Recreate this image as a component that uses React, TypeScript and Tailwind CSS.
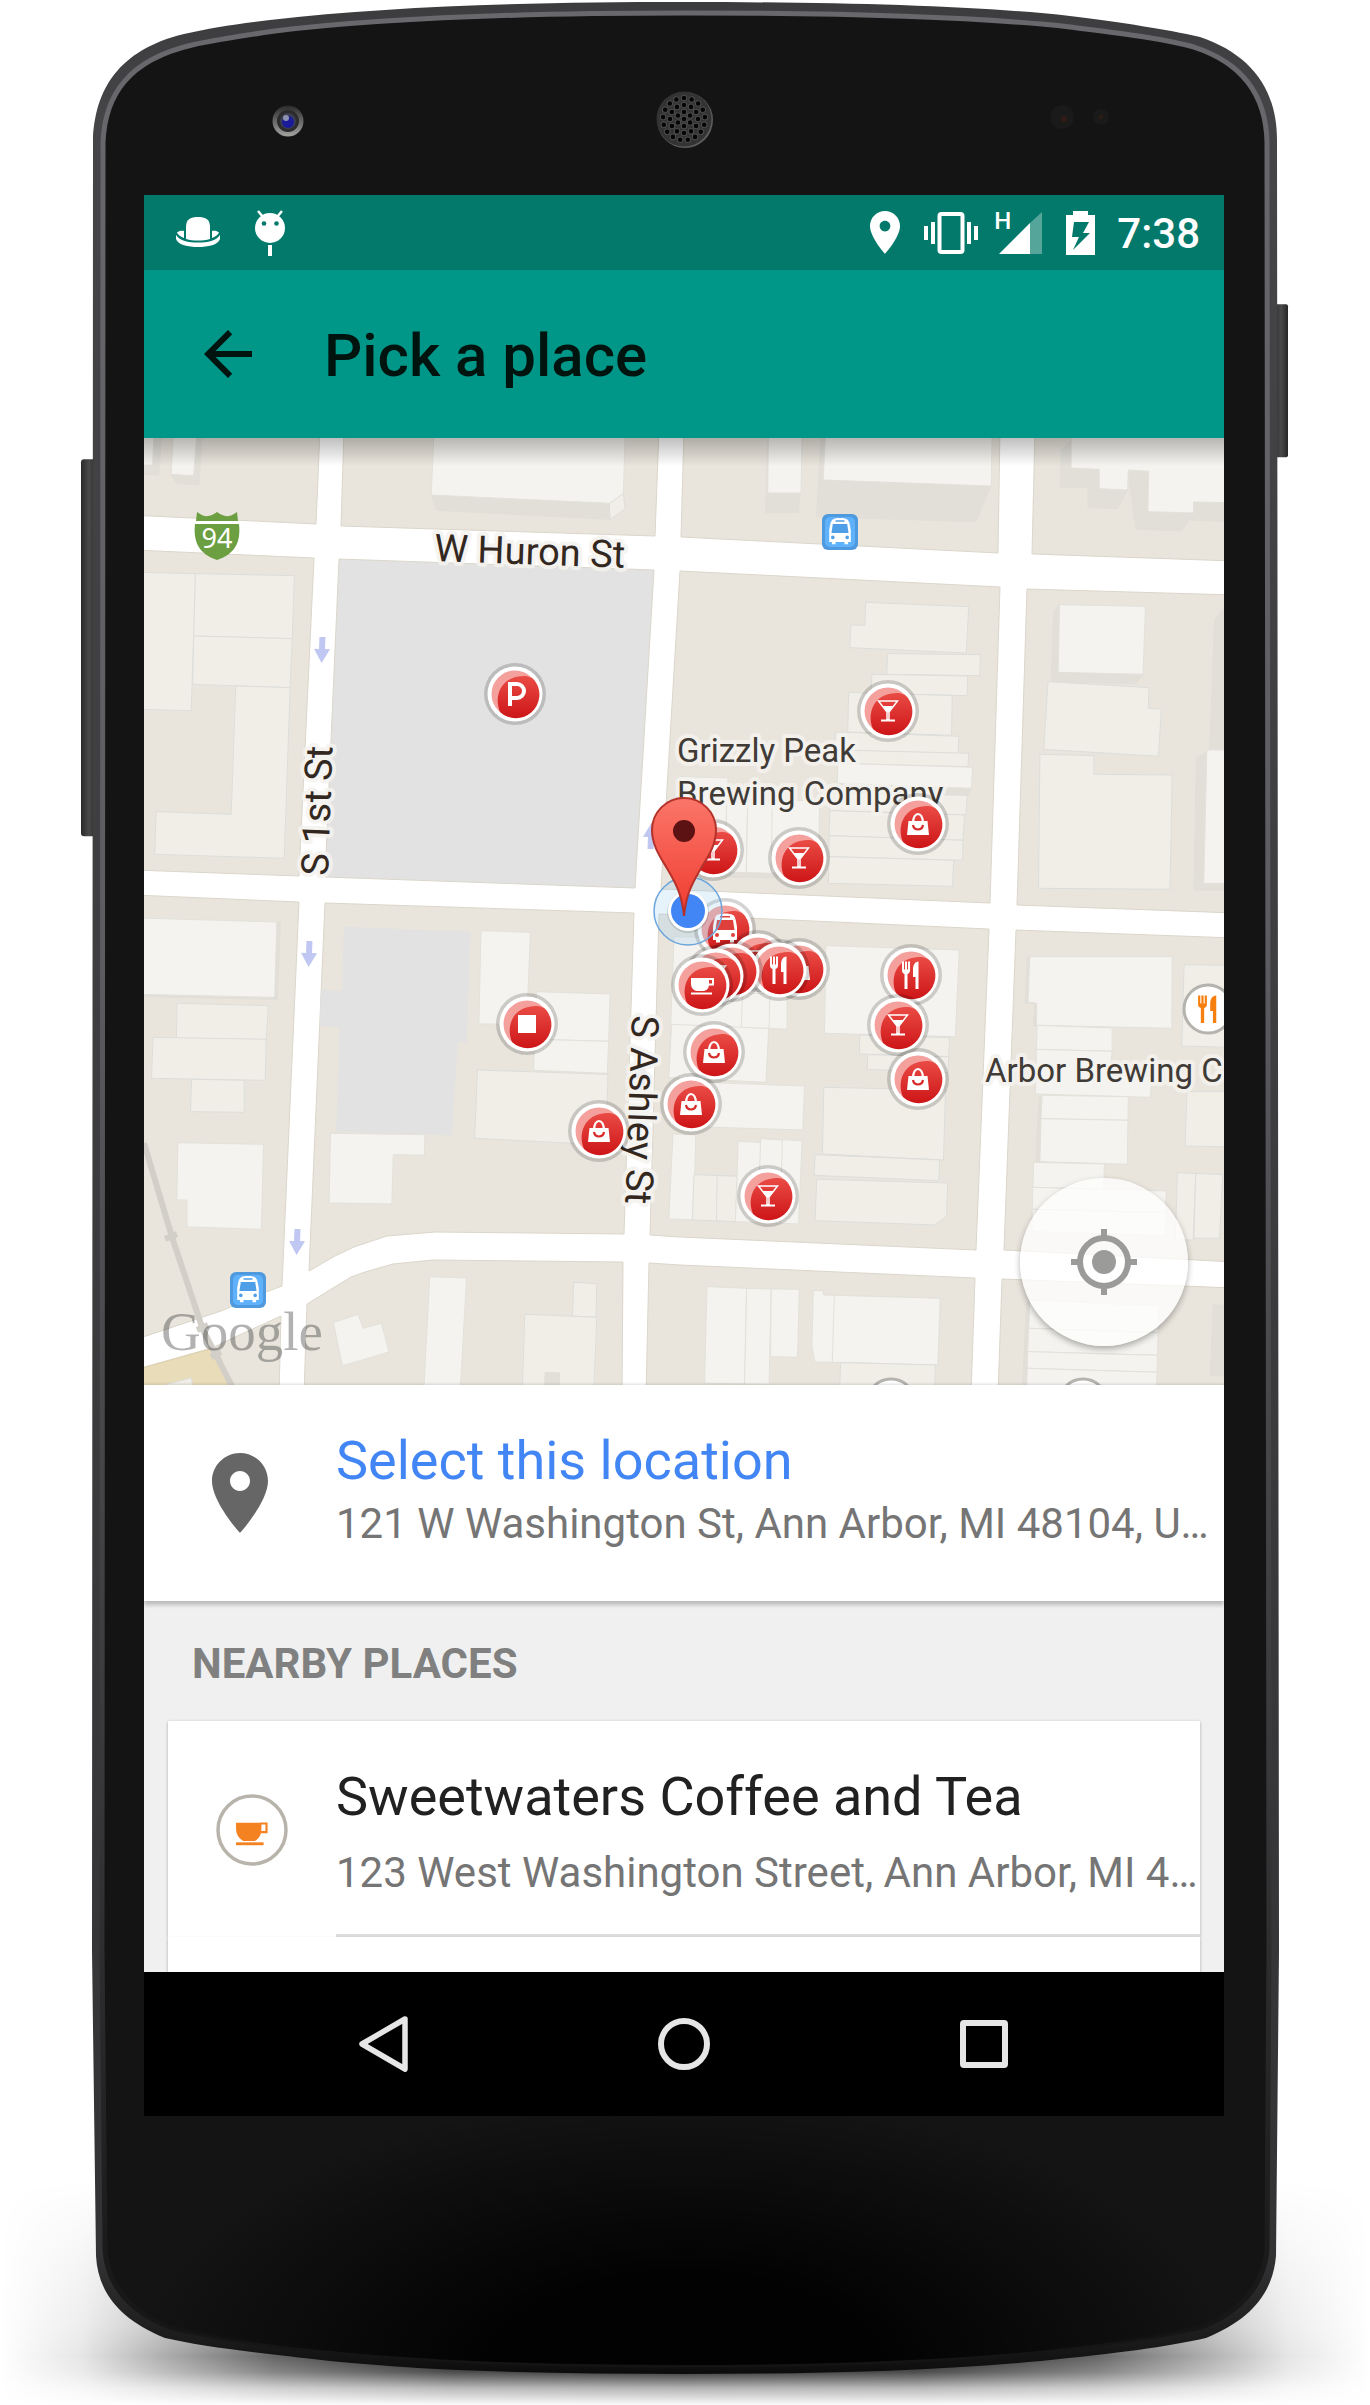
import React from "react";

type Kind = "tall" | "flat" | "side" | "lot" | "sand";
type Shape = [Kind, string];

const fills: Record<Kind, string> = {
  tall: "#f4f3ef",
  flat: "#f1eee7",
  side: "#e1dfd8",
  lot: "#e2e2e2",
  sand: "#e8dcb9",
};
const strokes: Record<Kind, string> = {
  tall: "#e3e1da",
  flat: "#dddedb",
  side: "#e1dfd8",
  lot: "#e2e2e2",
  sand: "#ded2ae",
};

const blocks = [
  "130,430 320,430 316,524 130,515",
  "344,430 341,526 655,536 659,430",
  "684,430 681,537 998,553 1000,430",
  "1035,430 1032,554 1234,561 1234,430",
  "134,550 314,558 299,876 134,870",
  "680,571 1000,587 990,903 661,889",
  "1027,589 1234,595 1234,913 1017,905",
  "134,895 299,902 282,1286 266,1292 221,1311 134,1340",
  "325,903 634,913 624,1234 435,1232 387,1236 354,1247 335,1256 309,1271",
  "659,914 989,929 976,1250 680,1237 650,1235",
  "1016,930 1234,938 1234,1262 1004,1250",
  "134,1370 212,1348 235,1337 281,1316 279,1395 134,1395",
  "307,1304 351,1277 365,1272 393,1264 433,1260 623,1262 622,1395 304,1395",
  "649,1263 680,1265 975,1278 971,1395 646,1395",
  "1002,1279 1234,1288 1234,1395 998,1395",
];

const northWest: Shape[] = [
  ["side", "0,10 62,10 53,135 0,133"],
  ["tall", "0,10 40,10 36,105 0,105"],
  ["side", "95,10 178,10 168,165 105,160 88,133"],
  ["tall", "95,10 162,10 153,137 88,133"],
  ["side", "830,195 1338,220 1340,268 845,241"],
  ["flat", "1338,220 1378,190 1383,236 1340,268"],
  ["tall", "838,10 1383,10 1378,190 1338,220 830,195"],
  ["flat", "0,427 158,431 153,618 146,842 0,838"],
  ["flat", "158,431 440,437 434,626 153,618"],
  ["flat", "153,618 434,626 428,773 150,763"],
  ["flat", "273,768 428,773 411,1285 42,1273 46,1145 260,1153"],
];

const northEast: Shape[] = [
  ["side", "250,10 350,10 338,248 244,248"],
  ["tall", "252,10 348,10 345,189 250,189"],
  ["side", "402,10 415,10 408,150 886,168 844,275 389,260"],
  ["tall", "415,10 890,10 887,168 408,150"],
  ["side", "1087,60 1115,30 1195,118 1276,180 1247,236 1163,232 1163,173 1083,173"],
  ["side", "1276,120 1336,122 1334,247 1464,218 1570,218 1570,275 1450,270 1430,302 1300,298"],
  ["tall", "1115,30 1118,10 1570,10 1570,218 1464,216 1464,249 1334,245 1336,124 1278,120 1276,180 1195,176 1195,118 1115,114"],
  ["flat", "529,517 823,530 816,669 484,653 487,585 527,586"],
  ["flat", "592,671 856,674 855,737 589,733"],
  ["flat", "547,733 820,738 818,797 545,790"],
  ["flat", "481,787 776,797 774,916 478,906"],
  ["flat", "443,906 795,919 793,970 440,960"],
  ["flat", "440,960 823,970 821,1010 440,1000"],
  ["side", "440,1060 831,1075 820,1096 440,1090"],
  ["tall", "450,1000 834,1012 831,1075 448,1060"],
  ["flat", "427,1090 819,1096 815,1155 427,1142"],
  ["flat", "427,1142 811,1155 807,1231 425,1217"],
  ["flat", "425,1217 807,1231 805,1291 425,1280"],
  ["flat", "425,1280 780,1291 777,1369 423,1360"],
  ["side", "0,1320 400,1330 390,1346 0,1340"],
  ["tall", "0,1040 137,1044 133,1118 398,1110 395,1330 0,1325"],
  ["tall", "133,1118 193,1118 189,1328 128,1326"],
  ["tall", "193,1118 263,1116 260,1330 189,1328"],
  ["side", "1080,524 1065,550 1058,755 1298,762 1321,733 1078,727"],
  ["tall", "1082,524 1327,529 1320,733 1078,727"],
  ["flat", "1049,755 1337,773 1335,835 1372,838 1364,979 1037,958"],
  ["flat", "1026,973 1180,977 1180,1033 1403,1035 1397,1378 1022,1375"],
  ["side", "1570,525 1551,535 1524,570 1510,960 1472,985 1465,1380 1570,1380"],
  ["tall", "1570,960 1502,960 1493,1360 1570,1360"],
];

const southWest: Shape[] = [
  ["side", "390,66 400,68 392,298 0,290 0,283 384,292"],
  ["tall", "0,54 390,66 384,292 0,283"],
  ["flat", "105,310 366,317 360,418 104,414"],
  ["flat", "37,412 360,418 357,541 33,535"],
  ["flat", "147,538 297,541 297,637 144,635"],
  ["tall", "108,728 352,733 346,988 134,981 134,900 105,900"],
  ["lot", "583,82 941,97 930,425 904,425 888,705 561,693 570,380 514,376 517,270 577,275"],
  ["tall", "972,92 1113,97 1106,280 1100,373 966,372"],
  ["tall", "1130,275 1340,282 1336,424 1125,418"],
  ["tall", "1125,418 1336,424 1332,520 1122,511"],
  ["flat", "962,510 1334,523 1328,735 954,715"],
  ["tall", "543,700 812,704 811,766 722,764 718,912 539,909"],
  ["tall", "551,1268 622,1243 636,1285 688,1270 710,1356 577,1398"],
  ["tall", "826,1130 931,1134 913,1470 809,1470"],
  ["flat", "1236,1147 1302,1151 1300,1252 1233,1248"],
  ["flat", "1097,1243 1302,1252 1294,1470 1090,1470"],
  ["side", "1155,1417 1196,1419 1195,1470 1153,1470"],
  ["sand", "0,1406 190,1350 218,1345 268,1470 0,1470"],
  ["flat", "70,1455 146,1434 152,1470 60,1470"],
];

const southEast: Shape[] = [
  ["tall", "-17,110 60,112 120,180 305,200 305,388 253,385 245,547 -32,533"],
  ["tall", "-24,373 253,385 245,547 -32,533"],
  ["tall", "178,280 256,280 254,385 175,382"],
  ["tall", "30,546 355,558 350,690 30,680"],
  ["tall", "-20,702 45,705 38,960 -32,957"],
  ["flat", "40,824 163,829 158,965 35,960"],
  ["flat", "106,827 163,829 158,965 104,962"],
  ["tall", "166,724 228,727 230,716 348,722 338,972 158,965"],
  ["tall", "230,716 292,720 285,970 222,968"],
  ["tall", "416,137 796,150 785,410 412,400"],
  ["flat", "512,405 769,413 766,470 512,462"],
  ["flat", "535,464 766,470 764,518 534,508"],
  ["flat", "410,562 757,570 751,780 406,762"],
  ["flat", "385,764 740,780 738,842 382,826"],
  ["flat", "390,838 763,849 760,950 725,975 385,962"],
  ["side", "990,170 998,170 992,308 1018,312 1016,380 1007,378 1012,312 984,308"],
  ["tall", "997,170 1403,170 1402,385 1016,376 1017,310 992,306"],
  ["flat", "1437,194 1570,196 1570,442 1430,438"],
  ["tall", "1018,376 1232,384 1232,454 1016,448"],
  ["tall", "1016,448 1232,454 1225,525 1345,530 1341,592 1013,582"],
  ["side", "1024,590 1032,590 1026,785 1014,785"],
  ["tall", "1032,586 1278,590 1277,661 1029,656"],
  ["tall", "1029,656 1277,661 1275,793 1026,785"],
  ["tall", "1008,787 1210,792 1208,868 1006,862"],
  ["tall", "1006,862 1386,873 1384,938 1004,928"],
  ["tall", "1004,928 1384,938 1383,1007 1003,995"],
  ["flat", "1445,575 1570,575 1570,741 1440,738"],
  ["flat", "1418,818 1470,820 1463,1020 1412,1020"],
  ["flat", "1470,820 1547,824 1538,1015 1465,1014"],
  ["tall", "77,1160 190,1165 184,1452 70,1450"],
  ["tall", "190,1165 260,1167 254,1453 184,1452"],
  ["tall", "260,1167 340,1168 335,1372 258,1370"],
  ["tall", "380,1172 408,1172 410,1185 742,1195 735,1395 384,1386 376,1340"],
  ["tall", "440,1186 742,1195 735,1395 434,1387"],
  ["flat", "458,1388 728,1395 726,1470 455,1470"],
  ["side", "988,1205 997,1200 990,1470 976,1470"],
  ["tall", "997,1200 1365,1218 1363,1298 994,1285"],
  ["tall", "994,1285 1363,1298 1361,1366 991,1355"],
  ["tall", "991,1355 1361,1366 1360,1417 990,1405"],
  ["tall", "990,1405 1360,1417 1358,1470 988,1470"],
  ["side", "1520,1215 1570,1217 1570,1430 1512,1425"],
];

/* Buildings of one map tile, drawn in the tile's own units. */
function Tile({ x, y, shapes }: { x: number; y: number; shapes: Shape[] }) {
  return (
    <g transform={`translate(${x} ${y}) scale(0.3508 0.3333)`}>
      {shapes.map(([kind, points]) => (
        <polygon
          key={points}
          points={points}
          fill={fills[kind]}
          stroke={strokes[kind]}
          strokeWidth="1"
          vectorEffect="non-scaling-stroke"
        />
      ))}
    </g>
  );
}

type Glyph = "bar" | "bag" | "food" | "cup" | "bus" | "stop" | "parking";

function PinGlyph({ glyph }: { glyph: Glyph }) {
  switch (glyph) {
    case "bar":
      return (
        <g>
          <path d="M-9.500 -10H9.500L1 1V8.500H-1V1Z" fill="none" stroke="#fff" strokeWidth="1.500" />
          <path d="M-6 -5H6L0 2Z" fill="#fff" />
          <path d="M-7 9.500H7" stroke="#fff" strokeWidth="2" />
        </g>
      );
    case "bag":
      return (
        <g>
          <path d="M-5 -1C-5 -13 5 -13 5 -1" fill="none" stroke="#fff" strokeWidth="2.200" />
          <path d="M-9.500 -3H9.500L11 11H-11Z" fill="#fff" />
          <path d="M-5 1C-4 7 4 7 5 1" fill="none" stroke="#d62a28" strokeWidth="2.200" />
        </g>
      );
    case "food":
      return <Cutlery color="#fff" />;
    case "cup":
      return <CupGlyph color="#fff" />;
    case "bus":
      return <BusGlyph window="#e0403c" />;
    case "stop":
      return <rect x="-9" y="-9" width="18" height="18" fill="#fff" />;
    default:
      return <path d="M-5 12V-10H2A6 6 0 0 1 2 4H-5" fill="none" stroke="#fff" strokeWidth="4" />;
  }
}

function Cutlery({ color }: { color: string }) {
  return (
    <g fill={color}>
      <path d="M-9 -13.500h2v8h1v-8h2v8h1v-8h2v9c0 2-1 3-2.500 3.500V14h-3V-1C-8 -1.500 -9 -2.500 -9 -4.500Z" />
      <path d="M7.500 -13.500V14h-3V2H2V-5C2 -10 4 -13.500 7.500 -13.500Z" />
    </g>
  );
}

function CupGlyph({ color }: { color: string }) {
  return (
    <g>
      <path d="M-11 -7H7V-1C7 4 4 6 1 6H-5C-8 6 -11 3 -11 -1Z" fill={color} />
      <path d="M7 -6h4v5.500H6" fill="none" stroke={color} strokeWidth="2" />
      <path d="M-11 8.500H10" stroke={color} strokeWidth="2" />
    </g>
  );
}

function BusGlyph({ window }: { window: string }) {
  return (
    <g>
      <path
        d="M-8 -14C-4 -16 4 -16 8 -14C10 -13 11 -9 12 -2V11H9V13.500H5V11H-5V13.500H-9V11H-12V-2C-11 -9 -10 -13 -8 -14Z"
        fill="#fff"
      />
      <path d="M-8 -9H8L9.500 1H-9.500ZM-5 -13H5V-11.500H-5Z" fill={window} />
      <circle cx="-8" cy="6" r="2" fill={window} />
      <circle cx="8" cy="6" r="2" fill={window} />
    </g>
  );
}

function Pin({ x, y, glyph }: { x: number; y: number; glyph: Glyph }) {
  return (
    <g transform={`translate(${x} ${y})`}>
      <circle r="31" fill="#000" fillOpacity="0.17" />
      <circle r="27.500" fill="#fff" />
      <circle r="23.500" fill="#f4a09d" />
      <path d="M-15 18C-21 4 -16 -17 8 -18C14 -18 18 -16 20 -13A23.500 23.500 0 0 1 -15 18Z" fill="url(#pinRed)" />
      <PinGlyph glyph={glyph} />
    </g>
  );
}

const pins: [number, number, Glyph][] = [
  [515, 694, "parking"],
  [888, 711, "bar"],
  [918, 824, "bag"],
  [713, 850, "bar"],
  [799, 858, "bar"],
  [725, 929, "bus"],
  [758, 961, "bar"],
  [799, 969, "bag"],
  [779, 970, "food"],
  [732, 971, "bag"],
  [716, 976, "bar"],
  [702, 985, "cup"],
  [911, 975, "food"],
  [898, 1025, "bar"],
  [918, 1079, "bag"],
  [714, 1052, "bag"],
  [691, 1104, "bag"],
  [768, 1196, "bar"],
  [599, 1131, "bag"],
  [527, 1024, "stop"],
];

function BusStop({ x, y }: { x: number; y: number }) {
  return (
    <g transform={`translate(${x} ${y})`}>
      <rect x="-18" y="-18" width="36" height="36" rx="6" fill="#4f9ade" />
      <rect x="-15" y="-15" width="30" height="30" rx="5" fill="#5fb1fb" />
      <g transform="scale(.9)">
        <BusGlyph window="#4f9fe8" />
      </g>
    </g>
  );
}

function OneWay({ x, y, up = false }: { x: number; y: number; up?: boolean }) {
  return (
    <path
      transform={`translate(${x} ${y}) rotate(${up ? 182 : 2})`}
      d="M-3 -13H3V-1H8L0 13L-8 -1H-3Z"
      fill="#bfc7f2"
    />
  );
}

function StreetMap() {
  const halo = {
    stroke: "#f5f3ef",
    strokeOpacity: 0.85,
    strokeWidth: 8,
    strokeLinejoin: "round" as const,
    paintOrder: "stroke",
  };
  return (
    <svg
      viewBox="144 438 1080 947"
      preserveAspectRatio="xMidYMid slice"
      className="block h-[947px] w-full font-[Roboto,sans-serif]"
      role="img"
      aria-label="Map of nearby places"
    >
      <defs>
        <linearGradient id="pinRed" x1="0" y1="0" x2="0" y2="1">
          <stop offset="0" stopColor="#ea4b45" />
          <stop offset="1" stopColor="#cd1517" />
        </linearGradient>
        <linearGradient id="markerRed" x1="0" y1="0" x2="0" y2="1">
          <stop offset="0" stopColor="#fb766a" />
          <stop offset="1" stopColor="#f03a2e" />
        </linearGradient>
      </defs>
      <rect x="144" y="438" width="1080" height="947" fill="#fff" />
      {blocks.map((points) => (
        <polygon key={points} points={points} fill="#e9e5dd" stroke="#dbd6ca" strokeWidth="1" />
      ))}
      <polygon points="339,559 654,570 635,888 325,877" fill="#e2e2e2" stroke="#dbd6ca" strokeWidth="1" />
      <Tile x={140} y={430} shapes={northWest} />
      <Tile x={680} y={430} shapes={northEast} />
      <Tile x={140} y={900} shapes={southWest} />
      <Tile x={680} y={900} shapes={southEast} />
      <g fill="none" stroke="#d2cfc9">
        <path d="M144 1143L172 1237L203 1330L234 1390" strokeWidth="6" />
        <path d="M165 1239l12-5M197 1330l11-5M211 1357l10-5" strokeWidth="6" />
      </g>

      <OneWay x={322} y={650} />
      <OneWay x={309} y={954} />
      <OneWay x={297} y={1242} />
      <OneWay x={651} y={836} up />
      <OneWay x={642} y={1078} up />

      <g fontSize="38" fill="#33281f" {...halo}>
        <text transform="translate(434 561) rotate(2)">W Huron St</text>
        <text transform="translate(328 876) rotate(-88)">S 1st St</text>
        <text transform="translate(632 1015) rotate(92)">S Ashley St</text>
      </g>
      <g fontSize="33" fill="#403b36" {...halo}>
        <text x="677" y="762">Grizzly Peak</text>
        <text x="677" y="805">Brewing Company</text>
        <text x="985" y="1082">Arbor Brewing C</text>
      </g>

      <g transform="translate(217 536)">
        <path d="M-20 -24C-12 -18 -7 -19 0 -24C7 -19 12 -18 20 -24L21 -15H-21Z" fill="#6b9f41" />
        <path d="M-22 -12H22C24 6 18 18 0 24C-18 18 -24 6 -22 -12Z" fill="#6b9f41" />
        <text y="12" textAnchor="middle" fontSize="27" fill="#fff" className="font-['Noto_Sans',sans-serif]">
          94
        </text>
      </g>
      <BusStop x={840} y={532} />
      <BusStop x={248} y={1290} />

      <g fill="#fff" stroke="#b5b3ad" strokeWidth="3">
        <circle cx="1208" cy="1009" r="24" />
        <circle cx="891" cy="1403" r="24" />
        <circle cx="1083" cy="1403" r="24" />
      </g>
      <g transform="translate(1208 1009) scale(1.100 1)">
        <Cutlery color="#f77f0e" />
      </g>

      {pins.map(([x, y, glyph]) => (
        <Pin key={`${x}-${y}`} x={x} y={y} glyph={glyph} />
      ))}

      <circle cx="688" cy="911" r="34" fill="#8cc8ef" fillOpacity="0.22" stroke="#6ba6dc" strokeWidth="1.500" />
      <circle cx="688" cy="912" r="21" fill="#000" fillOpacity="0.12" />
      <circle cx="688" cy="911" r="20" fill="#fff" />
      <circle cx="688" cy="911" r="17" fill="#4285f4" />
      <path
        d="M684 916C682 897 678 887 668 870C661 858 652 846 652 830A32 32 0 0 1 716 830C716 846 707 858 700 870C690 887 686 897 684 916Z"
        fill="url(#markerRed)"
        stroke="#b5322b"
        strokeWidth="2"
      />
      <circle cx="684" cy="831" r="11" fill="#5c1212" />

      <text
        x="161"
        y="1350"
        fontSize="55"
        fill="#000"
        fillOpacity="0.3"
        className="font-['Liberation_Serif',serif]"
      >
        Google
      </text>
    </svg>
  );
}

const grilleHoles: [number, number][] = [
  [0, 1],
  [7, 6],
  [14, 12],
  [21, 17],
].flatMap(([radius, count]) =>
  Array.from({ length: count }, (_, i): [number, number] => {
    const angle = (i / count) * Math.PI * 2 - Math.PI / 2;
    return [684 + radius * Math.cos(angle), 119 + radius * Math.sin(angle)];
  }),
);

const shell =
  "M684 2C840 2 980 6 1070 16C1125 23 1165 29 1200 37C1250 54 1277 88 1277 140L1279 1950L1276 2255C1273 2290 1253 2318 1206 2337C1165 2346 1120 2352 1041 2360C920 2371 800 2373 684 2373C560 2373 440 2371 330 2360C250 2351 205 2346 165 2337C118 2318 98 2290 96 2255L92 1950L93 140C95 90 118 50 184 34C210 28 235 24 270 20C390 6 530 2 684 2Z";
const face =
  "M684 13C840 13 980 17 1070 27C1125 34 1160 38 1194 47C1240 62 1266 92 1267 142L1269 1950L1267 2250C1263 2284 1242 2310 1202 2326C1160 2336 1110 2342 1040 2350C920 2361 800 2364 684 2364C560 2364 440 2361 330 2350C250 2342 210 2336 169 2326C129 2310 108 2284 105 2250L102 1950L103 142C105 95 128 60 192 45C215 40 240 36 275 31C390 17 530 13 684 13Z";

function Handset() {
  return (
    <svg
      viewBox="0 0 1370 2405"
      preserveAspectRatio="none"
      className="absolute inset-0 h-full w-full"
      aria-hidden="true"
    >
      <defs>
        <radialGradient id="faceShade" gradientUnits="userSpaceOnUse" cx="684" cy="2370" r="560" gradientTransform="translate(0 1185) scale(1 0.5)">
          <stop offset="0.35" stopColor="#000" stopOpacity="0.9" />
          <stop offset="1" stopColor="#000" stopOpacity="0" />
        </radialGradient>
        <linearGradient id="rim" x1="0" y1="0" x2="0" y2="1">
          <stop offset="0" stopColor="#3c3c3e" />
          <stop offset="0.05" stopColor="#454548" />
          <stop offset="0.5" stopColor="#3c3c3e" />
          <stop offset="0.95" stopColor="#333335" />
          <stop offset="0.985" stopColor="#1c1c1c" />
          <stop offset="1" stopColor="#0c0c0c" />
        </linearGradient>
        <linearGradient id="bevel" x1="0" y1="0" x2="0" y2="1">
          <stop offset="0" stopColor="#68686d" />
          <stop offset="0.4" stopColor="#5c5c61" />
          <stop offset="0.75" stopColor="#38383a" />
          <stop offset="1" stopColor="#141414" />
        </linearGradient>
        <linearGradient id="key" x1="0" y1="0" x2="1" y2="0">
          <stop offset="0" stopColor="#2a2a2a" />
          <stop offset="0.5" stopColor="#4a4a4a" />
          <stop offset="1" stopColor="#262626" />
        </linearGradient>
        <linearGradient id="lens" x1="0" y1="0" x2="0" y2="1">
          <stop offset="0" stopColor="#2b2b2b" />
          <stop offset="1" stopColor="#a3a3a3" />
        </linearGradient>
        <linearGradient id="shadowAcross" x1="0" y1="0" x2="1" y2="0">
          <stop offset="0" stopColor="#000" stopOpacity="0" />
          <stop offset="0.060" stopColor="#000" stopOpacity="0.1" />
          <stop offset="0.120" stopColor="#000" stopOpacity="0.32" />
          <stop offset="0.200" stopColor="#000" stopOpacity="0.6" />
          <stop offset="0.330" stopColor="#000" stopOpacity="0.88" />
          <stop offset="0.500" stopColor="#000" stopOpacity="0.95" />
          <stop offset="0.670" stopColor="#000" stopOpacity="0.88" />
          <stop offset="0.800" stopColor="#000" stopOpacity="0.6" />
          <stop offset="0.880" stopColor="#000" stopOpacity="0.32" />
          <stop offset="0.940" stopColor="#000" stopOpacity="0.1" />
          <stop offset="1" stopColor="#000" stopOpacity="0" />
        </linearGradient>
        <linearGradient id="shadowDown" x1="0" y1="0" x2="0" y2="1">
          <stop offset="0" stopColor="#000" />
          <stop offset="0.640" stopColor="#b0b0b0" />
          <stop offset="0.780" stopColor="#fff" />
          <stop offset="0.850" stopColor="#c8c8c8" />
          <stop offset="0.920" stopColor="#505050" />
          <stop offset="1" stopColor="#000" />
        </linearGradient>
        <mask id="shadowFade" maskUnits="userSpaceOnUse" x="0" y="2180" width="1370" height="225">
          <rect y="2180" width="1370" height="225" fill="url(#shadowDown)" />
        </mask>
      </defs>
      <rect y="2180" width="1370" height="225" fill="url(#shadowAcross)" mask="url(#shadowFade)" />
      <rect x="81" y="459" width="16" height="377" rx="3" fill="url(#key)" />
      <rect x="1274" y="304" width="14" height="153" rx="2" fill="url(#key)" />
      <path d={shell} fill="url(#rim)" />
      <path d={face} fill="#141414" stroke="url(#bevel)" strokeWidth="5" />
      <path d={face} fill="url(#faceShade)" />
      <circle cx="288" cy="121" r="15.500" fill="url(#lens)" />
      <circle cx="288" cy="121" r="11" fill="#2c2c2c" />
      <circle cx="288" cy="121" r="8" fill="#3c3f52" />
      <circle cx="288" cy="122" r="6" fill="#1a1a9a" />
      <circle cx="286" cy="118" r="3" fill="#8d93ad" />
      <circle cx="685" cy="120" r="28" fill="#5c5c5c" />
      <circle cx="684" cy="119" r="27.500" fill="#333" />
      {grilleHoles.map(([x, y]) => (
        <circle key={`${x}-${y}`} cx={x} cy={y} r="2.800" fill="#050505" stroke="#4c4c4c" />
      ))}
      <circle cx="1062" cy="117" r="12" fill="#1b1a1a" />
      <circle cx="1064" cy="119" r="3" fill="#2f1c14" />
      <circle cx="1101" cy="117" r="8" fill="#1b1a1a" />
      <circle cx="1101" cy="117" r="2" fill="#2f1c14" />
    </svg>
  );
}

const placePath =
  "M12 2C8.130 2 5 5.130 5 9c0 5.250 7 13 7 13s7-7.750 7-13c0-3.870-3.130-7-7-7zm0 9.500c-1.380 0-2.500-1.120-2.500-2.500s1.120-2.500 2.500-2.500 2.500 1.120 2.500 2.500-1.120 2.500-2.500 2.500z";

function StatusBar() {
  return (
    <div className="flex h-[75px] items-center bg-[#02796b] pr-6 pl-8 text-white">
      <div className="flex items-center gap-[35px]">
        <svg width="44" height="44" viewBox="0 0 44 44" fill="#fff" aria-label="Hat">
          <path d="M10 28V16C10 8 15 6 22 6S34 8 34 16V28C27 30 17 30 10 28Z" />
          <path d="M8 20V27C5 26 2 24 1 21.500C3 19.500 6 19.500 8 20ZM36 20V27C39 26 42 24 43 21.500C41 19.500 38 19.500 36 20Z" />
          <path d="M0 24C4 30 12 31.500 22 31.500S40 30 44 24V28C42 34 32 36 22 36S2 34 0 28Z" />
        </svg>
        <svg width="30" height="46" viewBox="0 0 30 46" aria-label="Android">
          <path d="M3 1L8 7M27 1L22 7" stroke="#fff" strokeWidth="2.500" />
          <ellipse cx="15" cy="18" rx="15" ry="15" fill="#fff" />
          <circle cx="9" cy="13.500" r="2.300" fill="#02796b" />
          <circle cx="21.500" cy="13.500" r="2.300" fill="#02796b" />
          <rect x="13" y="35" width="4" height="11" fill="#fff" />
        </svg>
      </div>
      <div className="ml-auto flex items-center">
        <svg width="30" height="43" viewBox="5 2 14 20" fill="#fff" className="mr-6" aria-label="Location">
          <path d={placePath} />
        </svg>
        <svg width="54" height="42" viewBox="0 0 54 42" className="mr-4" aria-label="Vibrate">
          <rect x="15.500" y="2" width="23" height="38" rx="2" fill="none" stroke="#fff" strokeWidth="4" />
          <path d="M0 14h4v14H0zM7 10h4v22H7zM43 10h4v22h-4zM50 14h4v14h-4z" fill="#fff" />
        </svg>
        <div className="relative mr-6 h-[43px] w-[48px]">
          <svg width="48" height="43" viewBox="0 0 48 43" aria-label="Signal">
            <path d="M48 1V43H36V12Z" fill="#fff" fillOpacity="0.33" />
            <path d="M5 43H36V12Z" fill="#fff" />
          </svg>
          <span className="absolute top-0 left-0 text-2xl leading-5 font-medium">H</span>
        </div>
        <svg width="29" height="44" viewBox="0 0 29 44" className="mr-[22px]" aria-label="Battery charging">
          <path
            fillRule="evenodd"
            fill="#fff"
            d="M7 0H22V4H29V44H0V4H7ZM8 11L6 26H13L7 39L24 22H17L23 11Z"
          />
        </svg>
        <span className="pt-[2px] text-[42px] leading-[50px] font-medium">7:38</span>
      </div>
    </div>
  );
}

export default function App() {
  return (
    <div className="min-h-screen bg-white font-[Roboto,sans-serif]">
      <div className="relative mx-auto w-full max-w-[1370px] pt-[195px] pr-[146px] pb-[290px] pl-36">
        <Handset />
        <main className="relative overflow-hidden bg-[#f0f0f0]">
          <StatusBar />
          <header className="flex h-[168px] items-center bg-[#009788] pl-12 text-[#00140f]">
            <button type="button" aria-label="Back" className="mr-[60px]">
              <svg width="72" height="72" viewBox="0 0 24 24" fill="currentColor">
                <path d="M20 11H7.830l5.590-5.590L12 4l-8 8 8 8 1.410-1.410L7.830 13H20v-2z" />
              </svg>
            </button>
            <h1 className="pt-1 text-[60px] leading-[72px] font-medium">Pick a place</h1>
          </header>

          <section className="relative">
            <StreetMap />
            <div className="pointer-events-none absolute inset-x-0 top-0 h-7 bg-linear-to-b from-black/25 to-transparent" />
            <div className="pointer-events-none absolute inset-x-0 bottom-0 h-[3px] bg-linear-to-t from-black/10 to-transparent" />
            <button
              type="button"
              aria-label="My location"
              className="absolute right-9 bottom-[39px] flex size-[168px] items-center justify-center rounded-full bg-white/75 shadow-[0_3px_6px_rgba(0,0,0,0.3)]"
            >
              <svg width="66" height="66" viewBox="0 0 66 66" fill="none" stroke="#9b9b99" strokeWidth="6">
                <circle cx="33" cy="33" r="24" />
                <circle cx="33" cy="33" r="12" fill="#9b9b99" stroke="none" />
                <path d="M33 0V9M33 57V66M0 33H9M57 33H66" />
              </svg>
            </button>
          </section>

          <button
            type="button"
            className="relative flex h-[216px] w-full items-start bg-white pt-11 pr-2 pl-12 text-left shadow-[0_4px_4px_rgba(0,0,0,0.22)]"
          >
            <svg width="96" height="96" viewBox="0 0 24 24" fill="#666" className="mt-4 mr-12 shrink-0">
              <path d={placePath} />
            </svg>
            <span className="flex min-w-0 flex-1 flex-col gap-[6px]">
              <span className="text-[54px] leading-[64px] text-[#4285f4]">Select this location</span>
              <span className="text-[42px] leading-[50px] whitespace-nowrap text-[#757575]">
                121 W Washington St, Ann Arbor, MI 48104, U…
              </span>
            </span>
          </button>

          <section>
            <h2 className="px-12 pt-[38px] pb-8 text-[42px] leading-[50px] font-bold text-[#808080]">
              NEARBY PLACES
            </h2>
            <ul className="px-6">
              <li className="relative bg-white shadow-[0_1px_3px_rgba(0,0,0,0.3)]">
                <a href="#sweetwaters" className="flex items-start pt-11">
                  <svg width="76" height="76" viewBox="-38 -38 76 76" className="mt-[27px] mr-[46px] ml-[46px] shrink-0">
                    <circle r="34" fill="#fff" stroke="#b8b4ac" strokeWidth="3.500" />
                    <g transform="scale(1.450)">
                      <path d="M-11 -5H6.500V-1C6.500 3 5 6 2 7.500H-6C-9 6 -11 3 -11 -1Z" fill="#f58220" />
                      <path d="M6 -4.500h4v6H5" fill="none" stroke="#f58220" strokeWidth="1.500" />
                      <path d="M-11 9.500H8" stroke="#f58220" strokeWidth="2" />
                    </g>
                  </svg>
                  <span className="flex min-w-0 flex-1 flex-col gap-[19px]">
                    <span className="text-[54px] leading-[64px] whitespace-nowrap text-[#212121]">
                      Sweetwaters Coffee and Tea
                    </span>
                    <span className="text-[42px] leading-[50px] whitespace-nowrap text-[#757575]">
                      123 West Washington Street, Ann Arbor, MI 4…
                    </span>
                  </span>
                </a>
                <div className="mt-9 ml-[168px] h-[3px] bg-[#dcdcdc]" />
              </li>
              <li className="relative h-[35px] bg-white shadow-[0_2px_3px_rgba(0,0,0,0.3)]" />
            </ul>
          </section>

          <nav className="relative flex h-36 items-center bg-black px-[90px]">
            <button type="button" aria-label="Back" className="flex flex-1 justify-center">
              <svg width="52" height="60" viewBox="0 0 52 60" fill="none" stroke="#e6e6e6" strokeWidth="5.500" strokeLinejoin="round">
                <path d="M47 5L4 30L47 55Z" />
              </svg>
            </button>
            <button type="button" aria-label="Home" className="flex flex-1 justify-center">
              <svg width="52" height="52" viewBox="0 0 52 52" fill="none" stroke="#e6e6e6" strokeWidth="6">
                <circle cx="26" cy="26" r="23" />
              </svg>
            </button>
            <button type="button" aria-label="Recent apps" className="flex flex-1 justify-center">
              <svg width="48" height="48" viewBox="0 0 48 48" fill="none" stroke="#e6e6e6" strokeWidth="6">
                <rect x="3" y="3" width="42" height="42" rx="1" />
              </svg>
            </button>
          </nav>
        </main>
      </div>
    </div>
  );
}
